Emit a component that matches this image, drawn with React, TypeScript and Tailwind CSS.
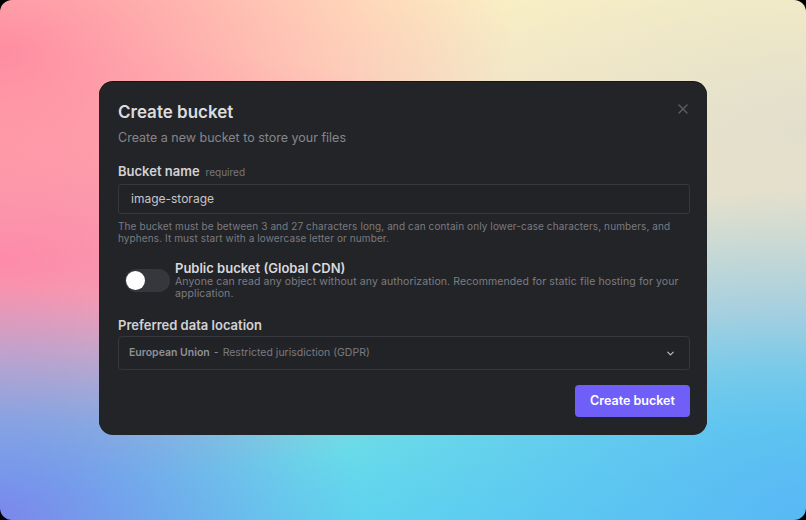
import React from 'react';
import { X, ChevronDown } from 'lucide-react';

const App: React.FC = () => {
  return (
    <div className="w-[806px] h-[520px] bg-black" style={{ fontFamily: 'Inter, "Noto Sans", sans-serif' }}>
      <div className="w-full h-full rounded-[12px] overflow-hidden bg-[radial-gradient(ellipse_at_0%_100%,rgba(125,130,235,0.95)_0%,transparent_32%),radial-gradient(ellipse_at_0%_10%,rgba(255,135,160,0.95)_0%,transparent_45%),radial-gradient(ellipse_at_0%_50%,rgba(255,135,170,0.95)_0%,transparent_60%),radial-gradient(ellipse_at_100%_100%,rgba(88,182,245,0.95)_0%,transparent_45%),radial-gradient(ellipse_at_100%_25%,rgba(222,222,205,0.9)_0%,transparent_45%),linear-gradient(180deg,#fff3c2_0%,#fbe6c6_30%,#c9dcd6_60%,#6ee0e6_82%,#5fd8ee_100%)] pt-[82px] pl-[99px]">
        {/* Modal */}
        <div className="relative w-[608px] rounded-[14px] bg-[#232428] pl-[19px] pr-[17px] pt-[18px] pb-[18px] shadow-[0_-1px_0_#151618]">
          <button className="absolute right-[16px] top-[19px] text-[#5c5d62]">
            <X className="w-[16px] h-[16px]" strokeWidth={2} />
          </button>

          <h2 className="text-[17px] leading-[24px] font-semibold text-[#dcdcde]">Create bucket</h2>
          <p className="mt-[5px] text-[12.5px] leading-[18px] text-[#85868b]">Create a new bucket to store your files</p>

          <div className="mt-[15px] flex items-baseline gap-[6px]">
            <span className="text-[13px] leading-[18px] font-semibold text-[#d2d2d5]">Bucket name</span>
            <span className="text-[10px] text-[#76777c]">required</span>
          </div>
          <div className="mt-[4px] h-[30px] rounded-[3px] border border-[#37383d] bg-[#222327] px-[12px] flex items-center text-[12px] text-[#c6c6ca]">
            image-storage
          </div>
          <p className="mt-[6px] pr-[8px] text-[10px] leading-[12px] tracking-[0.1px] text-[#7a7b80]">
            The bucket must be between 3 and 27 characters long, and can contain only lower-case characters, numbers, and hyphens. It must start with a lowercase letter or number.
          </p>

          <div className="mt-[17px] flex items-start gap-[5px]">
            <div className="ml-[7px] mt-[8px] w-[45px] h-[23px] rounded-full bg-[#36373c] flex items-center px-[1px] shrink-0">
              <div className="w-[19px] h-[19px] rounded-full bg-white" />
            </div>
            <div className="flex-1 pr-[8px]">
              <div className="text-[13px] leading-[15px] font-semibold text-[#d8d8db]">Public bucket (Global CDN)</div>
              <p className="text-[10.5px] leading-[12px] tracking-[0.1px] text-[#7c7d82]">
                Anyone can read any object without any authorization. Recommended for static file hosting for your application.
              </p>
            </div>
          </div>

          <div className="mt-[16px] text-[13px] leading-[18px] font-semibold text-[#d2d2d5]">Preferred data location</div>
          <div className="mt-[2px] h-[34px] rounded-[4px] border border-[#37383d] bg-[#222327] pl-[10px] pr-[13px] flex items-center text-[10.5px]">
            <span className="font-semibold text-[#909196]">European Union</span>
            <span className="mx-[4px] text-[#909196]">-</span>
            <span className="text-[#7a7b80]">Restricted jurisdiction (GDPR)</span>
            <ChevronDown className="ml-auto w-[11px] h-[11px] text-[#c0c0c4]" strokeWidth={2.5} />
          </div>

          <div className="mt-[15px] flex justify-end">
            <button className="h-[32px] w-[115px] rounded-[4px] bg-[#6f5ff8] text-[12.5px] font-semibold text-white">
              Create bucket
            </button>
          </div>
        </div>
      </div>
    </div>
  );
};

export default App;
